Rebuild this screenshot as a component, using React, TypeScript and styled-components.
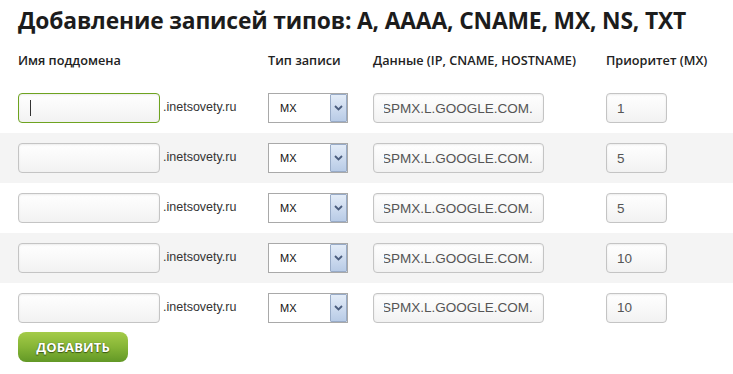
import { useEffect, useRef } from 'react'
import { createGlobalStyle } from 'styled-components'
import styled from 'styled-components'

const GlobalStyle = createGlobalStyle`
  body {
    margin: 0;
    background: #ffffff;
    font-family: "Liberation Sans", Arial, sans-serif;
  }
`

const Page = styled.div`
  padding-top: 6px;
  width: 733px;
`

const Title = styled.h1`
  margin: 0 0 0 18px;
  font-family: "Open Sans", sans-serif;
  font-weight: 700;
  font-size: 22.8px;
  line-height: 30px;
  color: #1c1c1c;
  letter-spacing: -0.15px;
  white-space: nowrap;
`

const Grid = styled.div<{ $shaded?: boolean; $height: number }>`
  display: grid;
  grid-template-columns: 142px 108px 105px 233px 61px;
  align-items: center;
  height: ${p => p.$height}px;
  padding-left: 18px;
  background: ${p => (p.$shaded ? '#f4f4f4' : 'transparent')};
`

const HeadCell = styled.div<{ $span?: number }>`
  grid-column: span ${p => p.$span ?? 1};
  font-family: "Open Sans", sans-serif;
  font-weight: 600;
  font-size: 12.7px;
  color: #222;
  white-space: nowrap;
`

const TextInput = styled.input<{ $focused?: boolean; $w: number }>`
  box-sizing: border-box;
  width: ${p => p.$w}px;
  height: 30px;
  padding: 0 10px;
  border: 1px solid ${p => (p.$focused ? '#6ea320' : '#c4c4c4')};
  border-radius: 4px;
  background-color: #fafafa;
  background-image: ${p =>
    p.$focused
      ? 'linear-gradient(#333, #333), linear-gradient(#ffffff, #f2f2f2)'
      : 'linear-gradient(#ffffff, #f2f2f2)'};
  background-repeat: no-repeat;
  background-size: ${p => (p.$focused ? '1px 16px, 100% 100%' : '100% 100%')};
  background-position: ${p => (p.$focused ? '11px center, 0 0' : '0 0')};
  box-shadow: inset 0 1px 2px rgba(0, 0, 0, 0.08);
  font-family: "Liberation Sans", Arial, sans-serif;
  font-size: 13.5px;
  color: #555;
  caret-color: transparent;
  outline: none;
`

const Zone = styled.span`
  padding-left: 3px;
  font-size: 12.5px;
  color: #333;
  margin-top: -2px;
`

const SelectBox = styled.div`
  box-sizing: border-box;
  display: flex;
  width: 80px;
  height: 30px;
  border: 1px solid #a9a9a9;
  background: #fff;
`

const SelectValue = styled.select`
  flex: 1;
  min-width: 0;
  appearance: none;
  border: none;
  background: transparent;
  padding: 0 0 0 11px;
  font-family: "Liberation Sans", Arial, sans-serif;
  font-size: 11px;
  color: #111;
  outline: none;
`

const Arrow = styled.span`
  box-sizing: border-box;
  width: 17px;
  display: flex;
  align-items: center;
  justify-content: center;
  border: 1px solid #98abc7;
  border-radius: 1px;
  background: linear-gradient(#e3ecf8, #b8cbe6);
`

const AddButton = styled.button`
  margin-left: 18px;
  width: 110px;
  height: 30px;
  border: none;
  border-radius: 8px;
  background: linear-gradient(#a4cb48, #86b536 50%, #629826);
  color: #fff;
  font-family: "Open Sans", sans-serif;
  font-weight: 700;
  font-size: 13px;
  letter-spacing: 0.1px;
  text-shadow: 0 1px 1px #3b5a12, 0 0 1px #3b5a12;
  cursor: pointer;
`

const priorities = ['1', '5', '5', '10', '10']

const Chevron = () => (
  <svg width="9" height="6" viewBox="0 0 9 6">
    <path d="M1 1 L4.5 4.5 L8 1" fill="none" stroke="#4a5d7e" strokeWidth="1.8" />
  </svg>
)

// the data field shows the end of a long value, scrolled like in the browser
const DataInput = () => {
  const ref = useRef<HTMLInputElement>(null)
  useEffect(() => {
    if (ref.current) ref.current.scrollLeft = ref.current.scrollWidth
  }, [])
  return <TextInput ref={ref} $w={171} defaultValue="ASPMX.L.GOOGLE.COM." />
}

const App = () => {
  return (
    <Page>
      <GlobalStyle />
      <Title>Добавление записей типов: A, AAAA, CNAME, MX, NS, TXT</Title>
      <Grid $height={47}>
        <HeadCell $span={2}>Имя поддомена</HeadCell>
        <HeadCell>Тип записи</HeadCell>
        <HeadCell>Данные (IP, CNAME, HOSTNAME)</HeadCell>
        <HeadCell>Приоритет (MX)</HeadCell>
      </Grid>
      {priorities.map((prio, i) => (
        <Grid key={i} $height={i === 4 ? 49 : 50} $shaded={i % 2 === 1}>
          <TextInput $w={142} $focused={i === 0} defaultValue="" />
          <Zone>.inetsovety.ru</Zone>
          <SelectBox>
            <SelectValue defaultValue="MX">
              <option>A</option>
              <option>AAAA</option>
              <option>CNAME</option>
              <option>MX</option>
              <option>NS</option>
              <option>TXT</option>
            </SelectValue>
            <Arrow>
              <Chevron />
            </Arrow>
          </SelectBox>
          <DataInput />
          <TextInput $w={61} defaultValue={prio} />
        </Grid>
      ))}
      <AddButton>ДОБАВИТЬ</AddButton>
    </Page>
  )
}

export default App
